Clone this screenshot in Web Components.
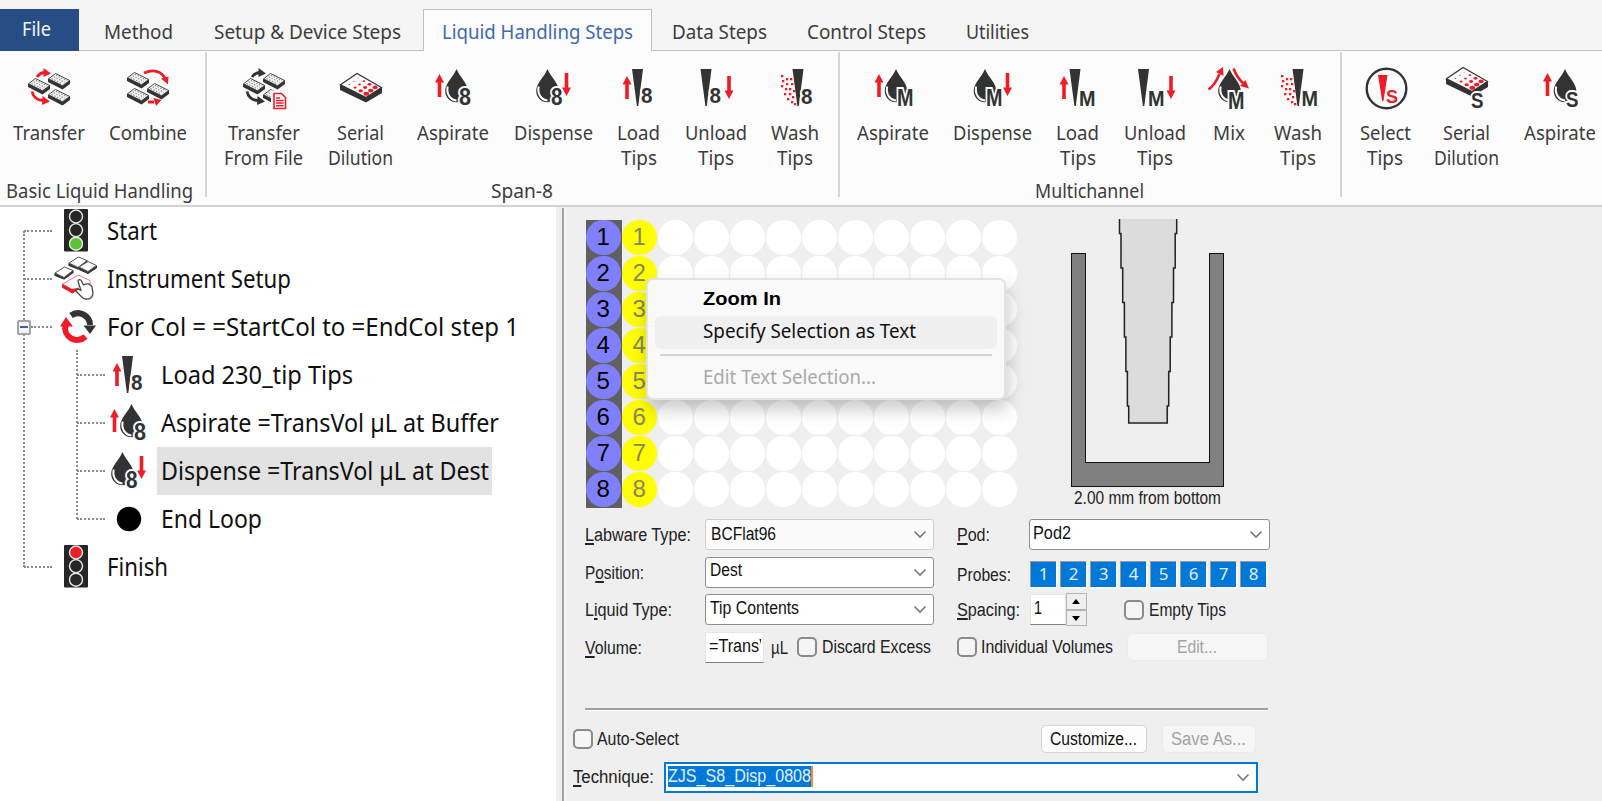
<!DOCTYPE html>
<html lang="en">
<head>
<meta charset="utf-8">
<title>Method Editor</title>
<style>
html,body{margin:0;padding:0;width:1602px;height:801px;overflow:hidden;background:#efefef}
body{font-family:"Noto Sans",sans-serif;color:#3c3c3c}
</style>
</head>
<body>
<app-window></app-window>
<script>
const define = (name, css, html, after) => customElements.define(name, class extends HTMLElement {
  constructor(){ super(); this.attachShadow({mode:'open'}); }
  connectedCallback(){
    if (this.ready) return; this.ready = true;
    const a = k => this.getAttribute(k) ?? '';
    this.shadowRoot.innerHTML = `<style>:host{display:block;box-sizing:border-box}:host *{box-sizing:border-box}${typeof css==='function'?css(a):css}</style>` + (typeof html==='function'?html(a):html);
    if (after) after.call(this);
  }
});

/* ---------- icon building blocks ---------- */
const INK = '#333', RED = '#ee1c25';
const up = (x,y) => `<path fill="${RED}" d="M${x} ${y}l4.500 8.500h-2.700v14.500h-3.600v-14.500h-2.700z"/>`;
const down = (x,y) => `<path fill="${RED}" d="M${x-1.8} ${y}h3.600v14.500h2.700l-4.500 8.500l-4.500-8.500h2.700z"/>`;
const drop = x => `<g transform="translate(${x} 3)"><path fill="${INK}" d="M0 0C3.500 8.500 11.300 14 11.300 22A11.300 11.300 0 0 1-11.300 22C-11.300 14-3.500 8.500 0 0z"/><path fill="none" stroke="#fff" stroke-width="2" d="M-8.800 17.500C-10.500 25-6 31 0 31.500"/></g>`;
const mark = (c,x,base,w,size=22,col=INK) => `<text x="${x}" y="${base}" textLength="${w}" lengthAdjust="spacingAndGlyphs" font-family="Liberation Sans,sans-serif" font-weight="700" font-size="${size}" fill="${col}" stroke="#fcfcfc" stroke-width="4" paint-order="stroke">${c}</text>`;
const tip = x => `<path fill="${INK}" d="M${x} 3h11l-4.700 37h-1.400z"/>`;
const spray = x => { let s=''; [[0,8],[1,13],[0,18],[5,11],[5,16],[9,11],[10,16],[4,21],[8,21],[3,26],[8,26],[11,29],[6,31],[10,34],[13,36],[12,23]].forEach(p=>s+=`<rect x="${x+p[0]}" y="${p[1]+1}" width="2.300" height="2.300" fill="${RED}"/>`); return s; };
const mini = (x,y) => `<g transform="translate(${x} ${y})"><path fill="${INK}" d="M0 6L0 9L14.500 16.500L22 11V7.500z"/><path fill="#f4f4f4" stroke="${INK}" stroke-width=".9" d="M.5 5.800L7.500.5L21.700 7.500L14.500 12.800z"/><path fill="none" stroke="#8a8a8a" stroke-width="1.100" stroke-dasharray="1.500 1.500" d="M3.500 5.500L14.500 11M5.700 3.800L17 9.400M7.800 2.300L19 7.800"/></g>`;
const plate = (y) => { let s=''; for(let r=0;r<3;r++)for(let c=0;c<4;c++){const q=.7+c*.55-r*.1;s+=`<ellipse cx="${12.500+c*5.600+r*4.400}" cy="${18.500+c*3.100-r*3.200}" rx="${q*1.200}" ry="${q*.85}" fill="${RED}"/>`;} return `<g transform="translate(0 ${y})"><path fill="${INK}" d="M3 19v5l26 12.500L45 27v-5z"/><path fill="#fcfcfc" stroke="${INK}" stroke-width="1.200" d="M3.500 18.800L20 7.500L44.500 21.500L29 31.500z"/>${s}</g>`; };
const swap = col => `<path fill="none" stroke="${col}" stroke-width="2.800" d="M12 11Q15 6.500 20 6.500M7 25.500Q9 34 18 34.500"/><path fill="${col}" d="M18.500 2l7.500 5.500l-7.500 3.500zM17.500 30l7.500 5.500l-8 3.500z"/>`;
const ICONS = {
  transfer: swap(RED)+mini(3,12)+mini(23,7)+mini(23,23),
  combine: mini(3,6)+mini(23,17)+mini(3,22)+`<path fill="none" stroke="${RED}" stroke-width="2.800" d="M20 7Q34 1 41 12M24 36h6"/><path fill="${RED}" d="M37 12.500l7.500-2l-.5 8zM29.500 32l8 2l-5.500 6z"/>`,
  transferFile: swap(INK)+mini(3,12)+mini(23,7)+mini(23,23)+`<path fill="#fff" stroke="#fcfcfc" stroke-width="4" d="M33 26.500h8l5 5v11.500h-13z"/><path fill="#fff" stroke="${RED}" stroke-width="1.600" d="M34 27.500h7.500l4 4v11h-11.500z"/><path stroke="${RED}" stroke-width="1.400" d="M36 32h4M36 34.500h7.500M36 37h7.500M36 39.700h7.500"/>`,
  serial: plate(0),
  serialS: plate(-6)+mark('S',28,41.500,12.500),
  asp8: up(9.500,8)+drop(26.500)+mark('8',29,38.500,12,23),
  disp8: drop(17.500)+mark('8',21,38.500,11.500,23)+down(36.500,7),
  load8: up(12,10)+tip(17)+mark('8',26,37,11.500),
  unload8: tip(7.500)+mark('8',16.500,37,11.500)+down(36,10),
  wash8: spray(9)+tip(20.500)+mark('8',29,38,11.500),
  aspM: up(9,8)+drop(26)+mark('M',27,40,16.500,23),
  dispM: drop(16)+mark('M',17,40,16.500,23)+down(38.500,7),
  loadM: up(10,10)+tip(15.500)+mark('M',25,40,16.500),
  unloadM: tip(6)+mark('M',16,40,16.500)+down(39,10),
  mixM: drop(23.500)+mark('M',22,43,16.500,23)+`<path fill="none" stroke="${RED}" stroke-width="2.600" d="M2.500 23.500Q9 19 13.500 8M27.500 2.500Q31 12 38 18"/><path fill="${RED}" d="M17 1l.5 9l-7.500-4zM43 22.500l-9-2.500l5.500-6z"/>`,
  washM: spray(6)+tip(17.500)+mark('M',26.500,40,16.500),
  selectS: `<circle cx="24.500" cy="22.500" r="19.800" fill="none" stroke="${INK}" stroke-width="2.400"/><path fill="${RED}" d="M16 9h9.500l-4 26h-1.300z"/>`+mark('S',24,37,12,19,RED),
  aspS: up(10.500,7)+drop(28)+mark('S',29,41,12.500)
};
const light = on => { const c=['#ee1c25','#f5c800','#5ac331']; let s='<rect x="12" y="0" width="24" height="42.500" rx="1" fill="#262626"/>'; for(let i=0;i<3;i++) s+=`<circle cx="24" cy="${7.500+i*13.600}" r="6.500" fill="${i===on?c[i]:'#262626'}" stroke="#e8e8e8" stroke-width="1.400"/>`; return s; };
ICONS.green = light(2); ICONS.red = light(0);
const tile = (x,y) => `<path fill="${INK}" stroke="${INK}" stroke-width="1.200" stroke-linejoin="round" d="M${x} ${y+7}v2l9 3.500l9-6.500v-2z"/><path fill="#fff" stroke="#555" stroke-width="1" stroke-linejoin="round" d="M${x} ${y+6.500}l9.500-6l8.500 3.500l-9 7z"/>`;
ICONS.setup = tile(17,-.5)+tile(3,9.500)+`<path fill="${INK}" stroke="${INK}" stroke-linejoin="round" d="M27 10.500v2l9 4l8.500-5.500v-2z"/><path fill="#fff" stroke="#555" stroke-linejoin="round" d="M27 10l9-5.500l8.500 4l-8.500 6z"/><path fill="${RED}" stroke="${RED}" d="M10.500 27v3.500l10 5.500l6-4v-4l-6 3z"/><path fill="#fff" d="M11 27L26 18l12 5.500v5L20 32z"/><path fill="none" stroke="#f4777c" d="M11 27L26 18l12 5.500v4"/><path fill="#fff" stroke="#444" stroke-width="1.300" stroke-linejoin="round" d="M26 24.500c0-2 2.500-2.500 3.500-.5l2 4c4-2.500 7.500-.5 8.500 2l1 6c0 4-3 6.500-7 6c-4 0-6-4.500-10-8c0-2 2.500-2 5-.5z"/>`;
ICONS.loop = `<g transform="translate(1.500 0)"><g fill="none" stroke-width="6"><path stroke="${INK}" d="M17.500 10.500A12 12 0 0 1 36.500 20"/><path stroke="${RED}" d="M32 31.500A12 12 0 0 1 12 20"/></g><path fill="${INK}" d="M30 20.500h12.500l-6 8.500z"/><path fill="${RED}" d="M6.500 21.500h13l-7-9.500z"/></g>`;
ICONS.dot = `<circle cx="24" cy="22" r="12.200" fill="#000"/>`;

define('glyph-icon', ':host{width:48px;height:44px;flex:none}svg{display:block;overflow:visible}',
  a => `<svg width="48" height="44" viewBox="0 0 48 44">${ICONS[a('name')]}</svg>`);

/* ---------- ribbon ---------- */
define('ribbon-tab', a => `:host{height:42px;margin-left:${a('gap')}px;font-size:19.500px;line-height:45px;padding:0 ${a('pad')||0}px;flex:none}
:host([kind=file]){background:#264d86;color:#f2f4f8;line-height:39px;padding:0 28px 0 22px}
:host([kind=active]){background:#fcfcfc;border:1px solid #c2c2c2;border-bottom:0;color:#4068b0;line-height:43px}`,
  a => `<fit-text w="${a('w')}"><slot></slot></fit-text>`);

define('ribbon-button', a => `:host{width:${a('w')}px;margin-left:${a('gap')}px;flex:none;display:flex;flex-direction:column;align-items:center;font-size:19.500px;line-height:25px}
glyph-icon{margin-bottom:10px}fit-text{position:relative;left:-.5px}`,
  a => `<glyph-icon name="${a('icon')}"></glyph-icon>` + a('label').split('|').map(t => { const [s,w]=t.split(':'); return `<fit-text w="${w}">${s}</fit-text>`; }).join(''));

define('ribbon-group', a => `:host{width:${a('width')}px;height:145px;margin-top:1px;flex:none;display:flex;flex-direction:column;border-right:${a('last')?0:2}px solid #d6d6d6}
.items{display:flex;flex:none;height:120px;padding-top:14px}
.name{display:flex;justify-content:center;margin-top:6px;font-size:19.500px;line-height:25px;padding-right:${a('shift')||1}px}`,
  a => `<div class="items"><slot></slot></div><div class="name">${a('name')?`<fit-text w="${a('nw')}">${a('name')}</fit-text>`:''}</div>`);

define('app-ribbon', `:host{height:207px;background:#f5f5f5}
.tabs{display:flex;height:51px;padding-top:9px;border-bottom:1px solid #c2c2c2}
.tabs ribbon-tab[kind=active]{height:42px}
.body{display:flex;height:156px;background:#fcfcfc;border-bottom:2px solid #d3d3d3;overflow:hidden}`,
`<div class="tabs">
<ribbon-tab kind="file" gap="0" w="29">File</ribbon-tab>
<ribbon-tab gap="25" w="69">Method</ribbon-tab>
<ribbon-tab gap="41" w="187">Setup &amp; Device Steps</ribbon-tab>
<ribbon-tab kind="active" gap="22" pad="18" w="191">Liquid Handling Steps</ribbon-tab>
<ribbon-tab gap="20" w="95">Data Steps</ribbon-tab>
<ribbon-tab gap="40" w="119">Control Steps</ribbon-tab>
<ribbon-tab gap="40" w="63">Utilities</ribbon-tab>
</div>
<div class="body">
<ribbon-group width="207" name="Basic Liquid Handling" nw="187" shift="7">
<ribbon-button gap="14" w="70" icon="transfer" label="Transfer:72"></ribbon-button>
<ribbon-button gap="26" w="76" icon="combine" label="Combine:78"></ribbon-button>
</ribbon-group>
<ribbon-group width="633" name="Span-8" nw="62">
<ribbon-button gap="18" w="78" icon="transferFile" label="Transfer:72|From File:79"></ribbon-button>
<ribbon-button gap="26" w="64" icon="serial" label="Serial:47|Dilution:65"></ribbon-button>
<ribbon-button gap="25" w="71" icon="asp8" label="Aspirate:72"></ribbon-button>
<ribbon-button gap="26" w="78" icon="disp8" label="Dispense:79"></ribbon-button>
<ribbon-button gap="25" w="42" icon="load8" label="Load:43|Tips:36"></ribbon-button>
<ribbon-button gap="26" w="61" icon="unload8" label="Unload:62|Tips:36"></ribbon-button>
<ribbon-button gap="25" w="47" icon="wash8" label="Wash:48|Tips:36"></ribbon-button>
</ribbon-group>
<ribbon-group width="502" name="Multichannel" nw="109">
<ribbon-button gap="18" w="71" icon="aspM" label="Aspirate:72"></ribbon-button>
<ribbon-button gap="25" w="78" icon="dispM" label="Dispense:79"></ribbon-button>
<ribbon-button gap="25" w="42" icon="loadM" label="Load:43|Tips:36"></ribbon-button>
<ribbon-button gap="26" w="61" icon="unloadM" label="Unload:62|Tips:36"></ribbon-button>
<ribbon-button gap="28" w="31" icon="mixM" label="Mix:32"></ribbon-button>
<ribbon-button gap="30" w="47" icon="washM" label="Wash:48|Tips:36"></ribbon-button>
</ribbon-group>
<ribbon-group width="260" last="1">
<ribbon-button gap="19" w="49" icon="selectS" label="Select:51|Tips:36"></ribbon-button>
<ribbon-button gap="25" w="64" icon="serialS" label="Serial:47|Dilution:65"></ribbon-button>
<ribbon-button gap="26" w="71" icon="aspS" label="Aspirate:72"></ribbon-button>
</ribbon-group>
</div>`);

/* ---------- method tree ---------- */
define('tree-row', a => `:host{display:flex;align-items:center;height:48px;font-size:25px;line-height:46px;color:#101010}
:host([level="1"]){padding-left:24px}:host([level="2"]){padding-left:77px}
.link{width:28px;height:0;border-top:2px dotted #8a8a8a;flex:none}
.icon{width:48px;height:44px;flex:none}
.label{height:48px;padding:0 3px 0 4px;margin-left:${a('level')==='2'?3.500:3}px}
:host([selected]) .label{background:#e2e2e2}
.fold{width:14px;height:15px;border:2px solid #a2a2a2;border-radius:2px;background:#f4f4f4;margin-left:-7px;flex:none;display:flex;align-items:center;justify-content:center;position:relative}
.fold::after{content:"";width:8px;height:1.500px;background:#3d5fb0}
.fold+.link{width:21px}`,
  a => `${a('fold')?'<div class="fold"></div>':''}<div class="link"></div><div class="icon"><glyph-icon name="${a('icon')}"></glyph-icon></div><div class="label"><fit-text w="${a('w')}"><slot></slot></fit-text></div>`);

define('method-tree', `:host{width:556px;height:594px;background:#fff;position:relative;flex:none}
.rail{position:absolute;width:0;border-left:2px dotted #8a8a8a}`,
`<div class="rail" style="left:23px;top:24px;height:336px"></div><div class="rail" style="left:76px;top:143px;height:169px"></div>
<tree-row level="1" icon="green" w="50">Start</tree-row>
<tree-row level="1" icon="setup" w="184">Instrument Setup</tree-row>
<tree-row level="1" fold="1" icon="loop" w="412">For Col = =StartCol to =EndCol step 1</tree-row>
<tree-row level="2" icon="load8" w="192">Load 230_tip Tips</tree-row>
<tree-row level="2" icon="asp8" w="338">Aspirate =TransVol µL at Buffer</tree-row>
<tree-row level="2" icon="disp8" selected w="328">Dispense =TransVol µL at Dest</tree-row>
<tree-row level="2" icon="dot" w="101">End Loop</tree-row>
<tree-row level="1" icon="red" w="61">Finish</tree-row>`);

/* ---------- plate and probe ---------- */
let wells = '';
for (let r=1;r<=8;r++) for (let c=0;c<12;c++) wells += `<div class="cell c${c}"><i>${c<2?r:''}</i></div>`;
define('well-plate', `:host{display:grid;grid-template:repeat(8,36px)/repeat(12,36px);width:432px;font:24px/34px "Liberation Sans",sans-serif;flex:none}
.c0{background:#606060}
i{display:block;width:34.500px;height:34.500px;margin-left:.5px;border-radius:50%;background:#fff;text-align:center;font-style:normal}
.c0 i{background:#8080ff;color:#000}.c1 i{background:#ff0;color:#868660}`, wells);

define('context-menu', `:host{position:absolute;left:646px;top:278px;width:360px;height:122px;background:#f9f9f9;border:2px solid #e3e3e3;border-radius:7px;box-shadow:2px 9px 18px rgba(0,0,0,.22);padding:4px 7px 0;font-size:19px;color:#101010}
.row{height:33px;line-height:31px;padding-left:48px;border-radius:6px}
.row.b{font-family:"Liberation Sans";font-weight:700;font-size:18.500px;color:#000;height:32px;line-height:29px}
.row.hot{background:#f0f0f0}
hr{border:0;height:1.500px;background:#d4d4d4;margin:5px 5px 5px}
.off{color:#a9a9a9}.row.off{line-height:32px}`,
`<div class="row b"><fit-text w="78">Zoom In</fit-text></div><div class="row hot"><fit-text w="213">Specify Selection as Text</fit-text></div><hr><div class="row off"><fit-text w="173">Edit Text Selection...</fit-text></div>`);

define('probe-view', `:host{width:180px;display:flex;flex-direction:column;align-items:center;flex:none;font-size:17.500px;line-height:20px;color:#222}svg{display:block}fit-text{margin-top:-1px}`,
`<svg width="180" height="274" viewBox="1058 215 180 274"><path shape-rendering="crispEdges" fill="#808080" stroke="#111" stroke-width="1.500" d="M1071.500 253.500h14v209h124v-209h14v233h-152z"/><path fill="#dcdcdc" d="M1119 219h58l-9 204h-39z"/><path fill="none" stroke="#222" stroke-width="1.500" d="M1119.500 219v14.500h1.500v34.500h1.700v34.500h1.700v34.500h1.500v34.500h1.500v34.500h1.300v17h38.500v-17h1.500v-34.500h1.500v-34.500h1.700v-34.500h1.600v-34.500h1.700v-34.500h1.500v-14.500"/></svg><fit-text w="147">2.00 mm from bottom</fit-text>`);

/* ---------- form controls ---------- */
define('combo-box', a => `:host{height:31px;width:${a('width')}px;border:1.500px solid #8f8f8f;border-radius:3px;background:#fff;display:flex;align-items:center;justify-content:space-between;padding:0 6px 0 ${a('pad')||4}px;color:#111;flex:none;line-height:25px}
:host([disabled]){border-color:#cfcfcf;background:#fbfbfb}
:host([focused]){border:2px solid #0078d7;border-radius:0;padding-left:2px}
.v{height:28px}:host([disabled]) .v{height:25px}
:host([focused]) .v{background:#0078d7;color:#e4eefb;height:21px;line-height:20px;margin-bottom:2px;border-right:2px solid #f08a3c}`,
  a => `<span class="v"><fit-text w="${a('w')}"><slot></slot></fit-text></span><svg width="14" height="9" viewBox="0 0 14 9"><path d="M1.500 1.500L7 7L12.500 1.500" fill="none" stroke="#777" stroke-width="1.600"/></svg>`);
define('check-box', a => `:host{display:flex;align-items:center;gap:${a('gap')||5}px;flex:none}
.b{width:20px;height:20px;border:2px solid #8a8a8a;border-radius:5px;background:#f5f5f5}`,
  a => `<span class="b"></span><fit-text w="${a('w')}"><slot></slot></fit-text>`);
define('push-button', a => `:host{width:${a('width')}px;height:28px;border:1.500px solid #d3d3d3;border-radius:5px;background:#fdfdfd;display:flex;align-items:center;justify-content:center;color:#111;flex:none}
:host([disabled]){background:#f6f6f6;border-color:#ebebeb;color:#a3a3a3}`,
  a => `<fit-text w="${a('w')}"><slot></slot></fit-text>`);
define('text-field', a => `:host{width:${a('width')}px;height:31px;background:#fff;border:1px solid #e6e6e6;border-bottom:1.500px solid #808080;padding:0 2px 0 3px;color:#111;line-height:26px;flex:none}
div{overflow:hidden;height:28px}`, a => `<div><fit-text w="${a('w')}"><slot></slot></fit-text></div>`);
define('number-spinner', `:host{width:21px;height:33px;display:grid;grid-template-rows:1fr 1fr;flex:none}
span{border:1.500px solid #b5b5b5;background:#efefef;display:flex;align-items:center;justify-content:center}`,
`<span><svg width="8" height="5"><path d="M0 5L4 0L8 5z"/></svg></span><span><svg width="8" height="5"><path d="M0 0L4 5L8 0z"/></svg></span>`);
define('probe-strip', `:host{display:flex;gap:4px;flex:none}
span{width:26px;height:26px;background:#0078d7;border-top:1.500px solid #9a9a9a;border-left:1.500px solid #9a9a9a;box-shadow:1.500px 1.500px 0 #fff;color:#e4eefb;text-align:center;font:17px/23px "Noto Sans",sans-serif;padding-left:1px}`,
  [1,2,3,4,5,6,7,8].map(n=>`<span>${n}</span>`).join(''));

define('step-form', `:host{display:grid;grid-template:repeat(4,37.500px)/372px 1fr;margin-left:20.500px;line-height:22px}
.r{display:flex;align-items:center}
.l{width:120px;flex:none}.k{width:72px;flex:none}.r.d .l,.r.d .k{padding-top:1px}
u{text-decoration-thickness:1.500px;text-underline-offset:2px}`,
`<div class="r"><div class="l"><fit-text w="106"><u>L</u>abware Type:</fit-text></div><combo-box disabled width="229" pad="5" w="65">BCFlat96</combo-box></div>
<div class="r"><div class="k"><fit-text w="33"><u>P</u>od:</fit-text></div><combo-box width="241" pad="3" w="38">Pod2</combo-box></div>
<div class="r d"><div class="l"><fit-text w="59">P<u>o</u>sition:</fit-text></div><combo-box width="229" pad="4" w="32">Dest</combo-box></div>
<div class="r d"><div class="k" style="padding-top:6px"><fit-text w="54">Probes:</fit-text></div><probe-strip style="margin:3px 0 0 1px"></probe-strip></div>
<div class="r d"><div class="l"><fit-text w="87">L<u>i</u>quid Type:</fit-text></div><combo-box width="229" pad="4" w="89">Tip Contents</combo-box></div>
<div class="r d"><div class="k"><fit-text w="63"><u>S</u>pacing:</fit-text></div><text-field width="36" w="8" style="margin-left:1px">1</text-field><number-spinner></number-spinner><check-box w="77" style="margin-left:37px">Empty Tips</check-box></div>
<div class="r d"><div class="l"><fit-text w="57"><u>V</u>olume:</fit-text></div><text-field width="59" w="61">=TransV</text-field><fit-text w="17" style="margin:2px 9px 0 7px">µL</fit-text><check-box w="109">Discard Excess</check-box></div>
<div class="r"><check-box gap="4" w="132">Individual Volumes</check-box><push-button disabled width="141" w="40" style="margin-left:14px">Edit...</push-button></div>`);

define('technique-bar', `:host{margin:42px 0 0 20.500px;width:683px}
hr{border:0;background:#a0a0a0;border-bottom:1px solid #fff;height:3px;margin:0}
.r{display:flex;align-items:center;margin-left:-12px}
.a{height:28px;margin-top:14px;margin-bottom:9px}
u{text-decoration-thickness:1.500px;text-underline-offset:2px}`,
`<hr><div class="r a"><check-box gap="4" w="82">Auto-Select</check-box><push-button width="106" w="87" style="margin-left:362px">Customize...</push-button><push-button disabled width="94" w="75" style="margin-left:15px">Save As...</push-button></div>
<div class="r"><fit-text w="81" style="margin:0 10px 2px 0"><u>T</u>echnique:</fit-text><combo-box focused width="594" w="143">ZJS_S8_Disp_0808</combo-box></div>`);

define('config-panel', `:host{flex:1;height:594px;padding-left:6px;background:#efefef;font:18px/22px "Liberation Sans",sans-serif;color:#222}
.in{border-left:2px solid #a0a0a0;height:593px;margin-top:1px;box-shadow:inset 2px 0 0 #f8f8f8}
.top{display:flex;height:308px;padding:12px 0 0 21.500px}
probe-view{margin:-5px 0 0 40px}`,
`<div class="in"><div class="top"><well-plate></well-plate><probe-view></probe-view></div><step-form></step-form><technique-bar></technique-bar></div>`);

define('app-window', ':host{width:1602px;height:801px;overflow:hidden;position:relative}.main{display:flex}',
`<app-ribbon></app-ribbon><div class="main"><method-tree></method-tree><config-panel></config-panel></div><context-menu></context-menu>`);

/* Text run squeezed or stretched horizontally to an exact advance width. */
define('fit-text', a => `:host{width:${a('w')}px;white-space:nowrap;flex:none}span{display:inline-block;transform-origin:0 50%;vertical-align:top}`,
  '<span><slot></slot></span>', function(){
    const s = this.shadowRoot.querySelector('span');
    const w = s.getBoundingClientRect().width;
    if (w) s.style.transform = `scaleX(${this.getAttribute('w')/w})`;
  });
</script>
</body>
</html>
